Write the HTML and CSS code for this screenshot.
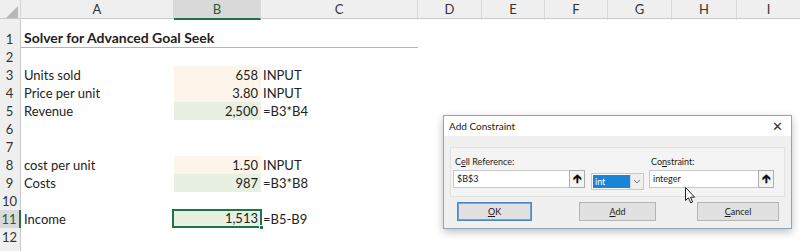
FILE: index.html
```html
<!DOCTYPE html>
<html lang="en">
<head>
    <meta charset="UTF-8">
    <title>Solver for Advanced Goal Seek</title>
    <link rel="stylesheet" href="styles.css">
</head>
<body>

    <!-- SHEET -->
    <div class="sheet">
        <div class="row head-row">
            <div class="corner"><span class="tri"></span></div>
            <div class="col-h">A</div>
            <div class="col-h active">B</div>
            <div class="col-h">C</div>
            <div class="col-h">D</div>
            <div class="col-h">E</div>
            <div class="col-h">F</div>
            <div class="col-h">G</div>
            <div class="col-h">H</div>
            <div class="col-h last">I</div>
        </div>

        <div class="row title-row">
            <div class="row-h">1</div>
            <div class="cell title">Solver for Advanced Goal Seek</div>
        </div>
        <div class="row"><div class="row-h">2</div></div>
        <div class="row">
            <div class="row-h">3</div>
            <div class="cell">Units sold</div>
            <div class="cell num input">658</div>
            <div class="cell note">INPUT</div>
        </div>
        <div class="row">
            <div class="row-h">4</div>
            <div class="cell">Price per unit</div>
            <div class="cell num input">3.80</div>
            <div class="cell note">INPUT</div>
        </div>
        <div class="row">
            <div class="row-h">5</div>
            <div class="cell">Revenue</div>
            <div class="cell num calc">2,500</div>
            <div class="cell note">=B3*B4</div>
        </div>
        <div class="row"><div class="row-h">6</div></div>
        <div class="row"><div class="row-h">7</div></div>
        <div class="row">
            <div class="row-h">8</div>
            <div class="cell">cost per unit</div>
            <div class="cell num input">1.50</div>
            <div class="cell note">INPUT</div>
        </div>
        <div class="row">
            <div class="row-h">9</div>
            <div class="cell">Costs</div>
            <div class="cell num calc">987</div>
            <div class="cell note">=B3*B8</div>
        </div>
        <div class="row"><div class="row-h">10</div></div>
        <div class="row">
            <div class="row-h active">11</div>
            <div class="cell">Income</div>
            <div class="cell num calc selected">1,513<span class="handle"></span></div>
            <div class="cell note">=B5-B9</div>
        </div>
        <div class="row"><div class="row-h">12</div></div>
        <div class="row"><div class="row-h"></div></div>
    </div>

    <!-- ADD CONSTRAINT DIALOG -->
    <div class="dialog">
        <div class="dlg-title">
            <span>Add Constraint</span>
            <span class="close">&#x2715;</span>
        </div>
        <div class="dlg-body">
            <div class="group">
                <div class="field ref">
                    <label>C<u>e</u>ll Reference:</label>
                    <div class="input-row">
                        <div class="text-in">$B$3</div>
                        <div class="pick">&#x1F871;</div>
                    </div>
                </div>
                <div class="combo">
                    <span class="combo-val">int</span>
                    <span class="combo-arrow">
                        <svg width="8" height="5" viewBox="0 0 8 5"><path d="M1 1 L4 4 L7 1" fill="none" stroke="#777" stroke-width="1"/></svg>
                    </span>
                </div>
                <div class="field con">
                    <label>Co<u>n</u>straint:</label>
                    <div class="input-row">
                        <div class="text-in">integer</div>
                        <div class="pick">&#x1F871;</div>
                    </div>
                </div>
            </div>
            <div class="buttons">
                <button class="btn default"><u>O</u>K</button>
                <button class="btn add"><u>A</u>dd</button>
                <button class="btn cancel"><u>C</u>ancel</button>
            </div>
        </div>
        <svg class="cursor" width="11" height="17" viewBox="0 0 11 17">
            <path d="M0.5 0.5 L0.5 13.5 L3.5 10.8 L5.6 15.8 L7.6 15 L5.6 10.2 L9.6 10.2 Z" fill="#fff" stroke="#222" stroke-width="1"/>
        </svg>
    </div>

</body>
</html>
```

FILE: styles.css
```css
* {
    margin: 0;
    padding: 0;
    box-sizing: border-box;
}

body {
    width: 800px;
    height: 251px;
    overflow: hidden;
    background: #fff;
    font-family: Lato, "Open Sans", sans-serif;
    color: #222;
    position: relative;
}

/* SHEET */
.sheet {
    height: 251px;
    overflow: hidden;
}

.row {
    display: grid;
    grid-template-columns: 21px 153px 87px 157px 64px 63px 63px 64px 65px 63px;
    height: 18px;
}

.head-row {
    height: 19px;
    background: #efefef;
    border-bottom: 1px solid #c8c8c8;
}

.corner {
    position: relative;
    border-right: 1px solid #d4d4d4;
}

.corner .tri {
    position: absolute;
    right: 2px;
    bottom: 2px;
    width: 0;
    height: 0;
    border-left: 12px solid transparent;
    border-bottom: 12px solid #b8b8b8;
}

.col-h {
    font-size: 13px;
    line-height: 18px;
    text-align: center;
    color: #333;
    border-right: 1px solid #d8d8d8;
}

.col-h.active {
    background: #d9d9d9;
    border-bottom: 2px solid #217346;
    color: #1e5b36;
}

.col-h.last { border-right: none; }

.row-h {
    background: #efefef;
    border-right: 1px solid #c8c8c8;
    font-size: 13px;
    line-height: 18px;
    text-align: center;
    color: #333;
    padding-right: 1px;
}

.row-h.active {
    background: #d9d9d9;
    border-right: 2px solid #217346;
    color: #1e5b36;
}

.cell {
    font-size: 13px;
    line-height: 18px;
    padding: 0 3px;
    white-space: nowrap;
}

.title-row {
    height: 29px;
}

.title-row .row-h {
    padding-top: 11px;
}

.title {
    grid-column: 2 / 5;
    font-weight: bold;
    font-size: 14px;
    padding-top: 10px;
    border-bottom: 1px solid #b4b4b4;
}

.num {
    text-align: right;
    padding-right: 3px;
}

.note { padding-left: 2px; }

.input { background: #fdf5ea; }

.calc { background: #e8f0e2; }

.selected {
    position: relative;
    border: 2px solid #217346;
    margin: -1px -1px 0 -2px;
    line-height: 15px;
    padding-right: 2px;
}

.selected .handle {
    position: absolute;
    right: -4px;
    bottom: -4px;
    width: 5px;
    height: 5px;
    background: #217346;
    border: 1px solid #fff;
}

/* DIALOG */
.dialog {
    position: absolute;
    left: 443px;
    top: 115px;
    width: 349px;
    height: 114px;
    border: 1px solid #8fa5b8;
    background: #f0f0f0;
    box-shadow: 0 3px 8px rgba(0, 0, 0, 0.25);
    font-family: Lato, "Open Sans", sans-serif;
    font-size: 9px;
    color: #1a1a1a;
}

.dlg-title {
    height: 20px;
    background: #fff;
    display: flex;
    justify-content: space-between;
    align-items: center;
    padding: 0 8px 0 5px;
    font-size: 10px;
}

.close {
    font-size: 13px;
    color: #333;
}

.dlg-body {
    padding: 11px 6px 0 6px;
}

.group {
    display: flex;
    align-items: flex-start;
    height: 50px;
    background: #f4f4f4;
    border: 1px solid #e2e2e2;
    padding: 6px 10px 0 2px;
}

.field label {
    display: block;
    height: 16px;
    line-height: 16px;
    padding-left: 2px;
}

.input-row {
    display: flex;
    height: 18px;
}

.text-in {
    background: #fff;
    border: 1px solid #c8c8c8;
    border-right: none;
    line-height: 16px;
    padding-left: 3px;
}

.ref .text-in { width: 116px; }

.con .text-in { width: 109px; }

.pick {
    width: 16px;
    border: 1px solid #adadad;
    background: #f4f4f4;
    text-align: center;
    font-size: 12px;
    font-weight: bold;
    line-height: 15px;
    color: #111;
}

.combo {
    display: flex;
    width: 54px;
    height: 17px;
    margin: 19px 5px 0 6px;
    background: #fff;
    border: 1px solid #c8c8c8;
}

.combo-val {
    width: 37px;
    margin: 1px 0 1px 1px;
    background: #1a84d6;
    color: #fff;
    line-height: 13px;
    padding-left: 2px;
}

.combo-arrow {
    flex: 1;
    display: flex;
    align-items: center;
    justify-content: center;
    border-left: 1px solid #d4d4d4;
    background: #efefef;
}

.buttons {
    display: flex;
    padding: 5px 0 0 7px;
}

.btn {
    height: 19px;
    background: #e1e1e1;
    border: 1px solid #b4b4b4;
    font-family: inherit;
    font-size: 9px;
    color: #1a1a1a;
}

.btn.default {
    width: 75px;
    border: 1px solid #4a86c8;
    box-shadow: inset 0 0 0 1px #6fa3da;
}

.btn.add {
    width: 77px;
    margin-left: 47px;
}

.btn.cancel {
    width: 82px;
    margin-left: 41px;
}

.cursor {
    position: absolute;
    left: 241px;
    top: 71px;
}
```
